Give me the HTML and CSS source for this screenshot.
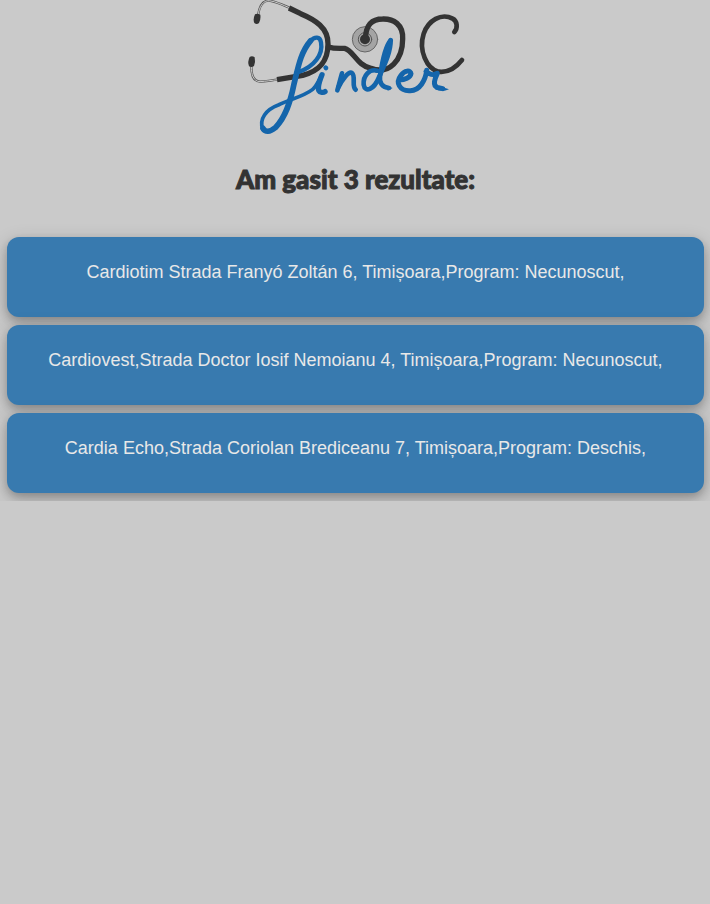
FILE: index.html
```html
<!DOCTYPE html>
<html lang="ro">
<head>
<meta charset="utf-8">
<meta name="viewport" content="width=device-width, initial-scale=1">
<title>Doc Finder</title>
<link rel="stylesheet" href="styles.css">
</head>
<body>
<main class="page">
  <header class="brand">
    <svg class="logo" viewBox="3 0 690 420" role="img" aria-label="Doc Finder" fill="none" stroke-linecap="round" stroke-linejoin="round">
      <!-- ear tubes -->
      <g stroke="#555" stroke-width="7">
        <path d="M54 46C58 18 70 1 88 2C108 5 126 14 150 24"/>
        <path d="M34 200C34 224 40 244 60 245C78 244 94 241 114 239"/>
      </g>
      <g stroke="#ccc" stroke-width="3">
        <path d="M54 46C58 18 70 1 88 2C108 5 126 14 150 24"/>
        <path d="M34 200C34 224 40 244 60 245C78 244 94 241 114 239"/>
      </g>
      <g fill="#333">
        <path d="M45 43Q52 39 61 44Q63 58 57 69Q50 75 43 69Q38 58 45 43Z"/>
        <path d="M29 171Q36 166 44 172Q47 186 42 198Q35 204 27 199Q22 185 29 171Z"/>
      </g>
      <!-- chest piece -->
      <circle cx="375" cy="118" r="38" fill="#a4a4a4" stroke="#666" stroke-width="3"/>
      <circle cx="375" cy="118" r="20" fill="#aaa" stroke="#555" stroke-width="3"/>
      <circle cx="375" cy="118" r="15" fill="#333"/>
      <!-- tubing -->
      <g stroke="#333">
        <path stroke-width="16" stroke-linecap="butt" d="M147 24L182 41C225 59 265 83 264 132C264 188 234 214 188 226L111 239"/>
        <path stroke-width="16" d="M265 141C284 147 304 145 314 145C340 151 351 197 393 205C448 225 488 180 488 117C490 73 460 56 428 57C394 57 378 76 376 116"/>
        <path stroke-width="14" d="M643 96C654 85 652 63 638 56C604 38 565 61 551 101C535 151 560 207 596 215C627 219 647 204 666 180"/>
      </g>
      <!-- lettering strokes -->
      <g stroke="#1465ab">
        <path stroke-width="13" d="M176 216C222 200 250 164 243 127C240 109 225 108 210 124"/>
        <path stroke-width="17" d="M212 122C181 158 174 204 162 252C151 307 137 351 106 383C89 397 76 397 69 385"/>
        <path stroke-width="11" d="M68 388C57 356 78 329 115 315C147 299 192 289 218 268C230 258 237 239 245 226"/>
        <path stroke-width="16" d="M246 224C235 251 229 276 245 277Q251 278 255 275"/>
        <path stroke-width="14" d="M257 203L258 204M295 262C306 240 325 213 336 219C348 228 334 259 347 269"/>
        <path stroke-width="14" d="M306 220C300 241 296 257 292 271"/>
        <path stroke-width="14" d="M412 212C389 206 369 225 371 254C375 280 402 268 416 234C432 197 452 158 452 121"/>
        <path stroke-width="14" d="M452 121C437 137 425 195 420 229C417 250 428 262 447 264"/>
        <path stroke-width="15" d="M478 240C494 240 511 233 513 221C512 209 493 211 483 226C465 249 480 272 507 272C540 275 557 238 560 211M558 214C571 226 580 226 592 220C584 237 577 257 592 262L608 266"/>
      </g>
      <path fill="#1465ab" d="M440 257L458 264L443 272ZM585 254L627 268Q606 277 585 268Z"/>
    </svg>
  </header>
  <h1 class="title">Am gasit 3 rezultate:</h1>
  <ul class="results">
    <li class="card">Cardiotim Strada Franyó Zoltán 6, Timișoara,Program: Necunoscut,</li>
    <li class="card">Cardiovest,Strada Doctor Iosif Nemoianu 4, Timișoara,Program: Necunoscut,</li>
    <li class="card">Cardia Echo,Strada Coriolan Brediceanu 7, Timișoara,Program: Deschis,</li>
  </ul>
</main>
</body>
</html>
```
FILE: styles.css
```css
* {
  box-sizing: border-box;
}

body {
  margin: 0;
  background: #cacaca;
  color: #333;
  font-family: "Liberation Sans", Arial, sans-serif;
}

.page {
  overflow: hidden;
  padding: 0 6px 8px 7px;
}

.brand {
  display: flex;
  justify-content: center;
}

.logo {
  display: block;
  width: 230px;
  height: 140px;
}

.title {
  margin: 19px 0 38px;
  font-family: Lato, sans-serif;
  font-size: 26px;
  font-weight: 900;
  line-height: 40px;
  text-align: center;
  -webkit-text-stroke: 1px #333;
}

.results {
  display: grid;
  gap: 8px;
  margin: 0;
  padding: 0;
  list-style: none;
}

.card {
  min-height: 80px;
  padding: 25px 16px;
  border-radius: 12px;
  background: #387aaf;
  box-shadow: 0 4px 8px rgba(0, 0, 0, 0.2), 0 6px 20px rgba(0, 0, 0, 0.19);
  color: #e8e8e8;
  font-size: 18px;
  line-height: 20px;
  text-align: center;
}
```
